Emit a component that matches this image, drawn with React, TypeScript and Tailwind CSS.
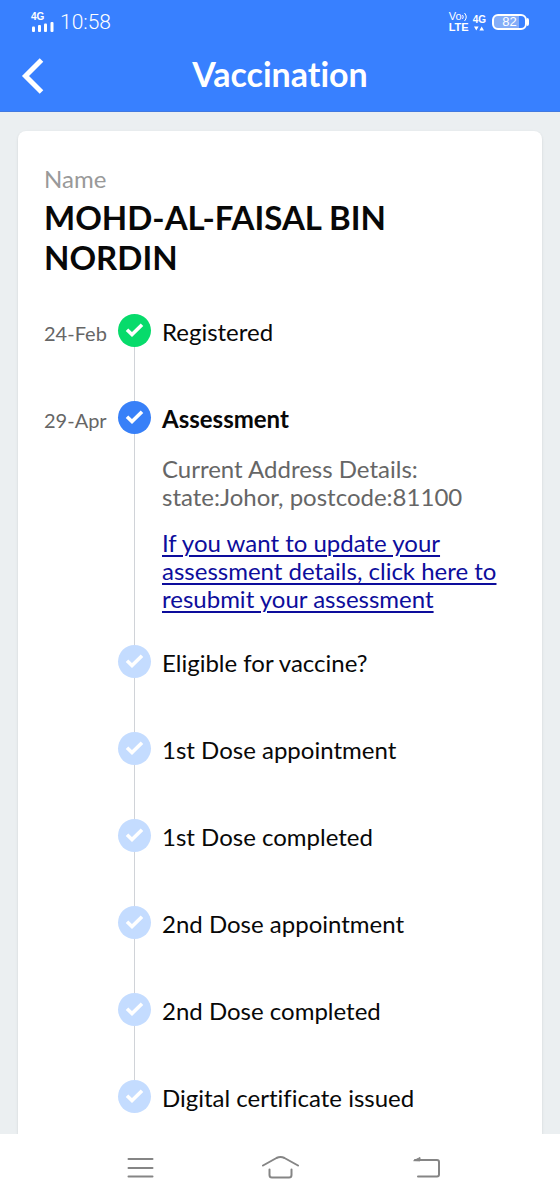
type StepState = "done" | "current" | "pending";

interface Step {
  date?: string;
  label: string;
  state: StepState;
  details?: boolean;
}

const steps: Step[] = [
  { date: "24-Feb", label: "Registered", state: "done" },
  { date: "29-Apr", label: "Assessment", state: "current", details: true },
  { label: "Eligible for vaccine?", state: "pending" },
  { label: "1st Dose appointment", state: "pending" },
  { label: "1st Dose completed", state: "pending" },
  { label: "2nd Dose appointment", state: "pending" },
  { label: "2nd Dose completed", state: "pending" },
  { label: "Digital certificate issued", state: "pending" },
];

const badgeColors: Record<StepState, string> = {
  done: "bg-[#07db6b]",
  current: "bg-[#3880f8]",
  pending: "bg-[#c4dcff]",
};

function StatusBar() {
  return (
    <div className="flex h-11 items-center justify-between pr-[31px] pl-[31px]">
      <div className="flex items-center gap-[6px]">
        <div className="flex flex-col font-['Liberation_Sans',sans-serif]">
          <span className="text-[10px] leading-[10px] font-bold">4G</span>
          <svg width="23" height="10" viewBox="0 0 23 10" fill="currentColor" aria-hidden="true">
            <rect x="1" y="4.500" width="3" height="5.500" rx="1" />
            <rect x="7" y="3" width="3" height="7" rx="1" />
            <rect x="13" y="1.500" width="3" height="8.500" rx="1" />
            <rect x="19.500" y="0" width="3" height="10" rx="1" />
          </svg>
        </div>
        <span className="font-['Roboto','Liberation_Sans',sans-serif] text-[21px] leading-6 font-light">10:58</span>
      </div>
      <div className="flex items-center gap-1 font-['Liberation_Sans',sans-serif]">
        <div className="flex flex-col text-[11px] leading-[11px]">
          <span className="flex items-center">
            Vo
            <svg width="6" height="10" viewBox="0 0 6 10" fill="none" stroke="currentColor" aria-hidden="true">
              <path d="M0.500 3q1.500 2 0 4M2.500 1q3.500 4 0 8" />
            </svg>
          </span>
          <span className="font-bold">LTE</span>
        </div>
        <div className="flex flex-col items-center gap-px">
          <span className="text-[10px] leading-[11px] font-bold">4G</span>
          <svg width="10" height="5" viewBox="0 0 10 5" fill="currentColor" aria-hidden="true">
            <path d="M0 0.500h4.600L2.300 4.500zM5.400 4.500H10L7.700 0.500z" />
          </svg>
        </div>
        <div className="ml-[2px] flex items-center">
          <div className="flex h-4 w-[35px] items-center justify-center rounded-[6px] border-2 border-white bg-linear-to-r from-[#84adf8] from-80% to-[#3880ff] to-80%">
            <span className="text-[13px] leading-3">82</span>
          </div>
          <div className="h-2 w-[2px] rounded-r-sm bg-white" />
        </div>
      </div>
    </div>
  );
}

function Header() {
  return (
    <header className="bg-[#3880ff] text-white">
      <StatusBar />
      <div className="grid h-17 grid-cols-[64px_1fr_64px] items-center border-b border-[#4279e0] pb-2">
        <button type="button" aria-label="Back" className="flex h-12 items-center pt-1 pl-[21px]">
          <svg width="24" height="36" viewBox="0 0 24 36" fill="none" stroke="currentColor" strokeWidth="5" aria-hidden="true">
            <path d="M20.500 2L4.500 18l16 16" />
          </svg>
        </button>
        <h1 className="text-center text-[34px] leading-9 font-bold">Vaccination</h1>
      </div>
    </header>
  );
}

function Badge({ state }: { state: StepState }) {
  return (
    <span className={`flex size-[33px] shrink-0 items-center justify-center rounded-full ${badgeColors[state]}`}>
      <svg width="19" height="15" viewBox="0 0 19 15" fill="none" stroke="white" strokeWidth="3.600" aria-hidden="true">
        <path d="M2 6.800l5 4.800L17 1.800" />
      </svg>
    </span>
  );
}

function TimelineStep({ step, last }: { step: Step; last: boolean }) {
  return (
    <li className={`flex ${last ? "" : "min-h-[87px]"}`}>
      <span className="w-[74px] shrink-0 pt-[5px] text-[20px] leading-7 text-[#666666]">{step.date}</span>
      <div className="flex shrink-0 flex-col items-center">
        <Badge state={step.state} />
        {!last && <span className="w-px flex-1 bg-[#d0d3d8]" />}
      </div>
      <div className="min-w-0 flex-1 pt-1 pl-[11px] text-[24px] leading-7">
        <h3 className={step.state === "current" ? "font-bold" : ""}>{step.label}</h3>
        {step.details && (
          <div className="pt-[22px] pb-8">
            <p className="text-[#666666]">
              Current Address Details:
              <br />
              state:Johor, postcode:81100
            </p>
            <a
              href="#assessment"
              className="mt-[18px] block text-[#0d0d9c] underline decoration-2 underline-offset-[3px]"
            >
              If you want to update your assessment details, click here to resubmit your assessment
            </a>
          </div>
        )}
      </div>
    </li>
  );
}

function SystemNav() {
  return (
    <nav aria-label="System" className="sticky bottom-0 flex h-[66px] items-center justify-between bg-white px-[119px] text-[#858585]">
      <button type="button" aria-label="Recent apps">
        <svg width="42" height="24" viewBox="0 0 42 24" fill="none" stroke="currentColor" strokeWidth="2" strokeLinecap="round" aria-hidden="true">
          <path d="M9.500 4h24M9.500 13h24M9.500 21.500h24" />
        </svg>
      </button>
      <button type="button" aria-label="Home">
        <svg width="42" height="24" viewBox="0 0 42 24" fill="none" stroke="currentColor" strokeWidth="2" strokeLinecap="round" strokeLinejoin="round" aria-hidden="true">
          <path d="M4 10.500L17.500 3Q21.500 1 25.500 3L39 10.500M10.500 14.500v5.500q0 2.500 2.500 2.500h17q2.500 0 2.500-2.500v-5.500" />
        </svg>
      </button>
      <button type="button" aria-label="Back to previous screen">
        <svg width="42" height="24" viewBox="0 0 42 24" fill="none" stroke="currentColor" strokeWidth="2" strokeLinecap="round" strokeLinejoin="round" aria-hidden="true">
          <path d="M16 5h22q2 0 2 2v12.500q0 2-2 2H19" />
          <path d="M15 5.500l6-3v3z" fill="currentColor" strokeWidth="1" />
        </svg>
      </button>
    </nav>
  );
}

export default function App() {
  return (
    <div className="flex min-h-screen flex-col bg-[#ebeff1] font-['Lato','Liberation_Sans',sans-serif] text-[#080808] [font-variant-ligatures:none]">
      <Header />
      <main className="flex flex-1 flex-col px-[18px] pt-[19px]">
        <section className="flex-1 rounded-t-lg bg-white px-[26px] pt-[34px] pb-[19px] shadow-sm">
          <p className="text-[24px] leading-7 text-[#999999]">Name</p>
          <h2 className="pt-1 text-[33px] leading-10 font-bold">MOHD-AL-FAISAL BIN NORDIN</h2>
          <ol className="pt-[37px]">
            {steps.map((step, i) => (
              <TimelineStep key={step.label} step={step} last={i === steps.length - 1} />
            ))}
          </ol>
        </section>
      </main>
      <SystemNav />
    </div>
  );
}
